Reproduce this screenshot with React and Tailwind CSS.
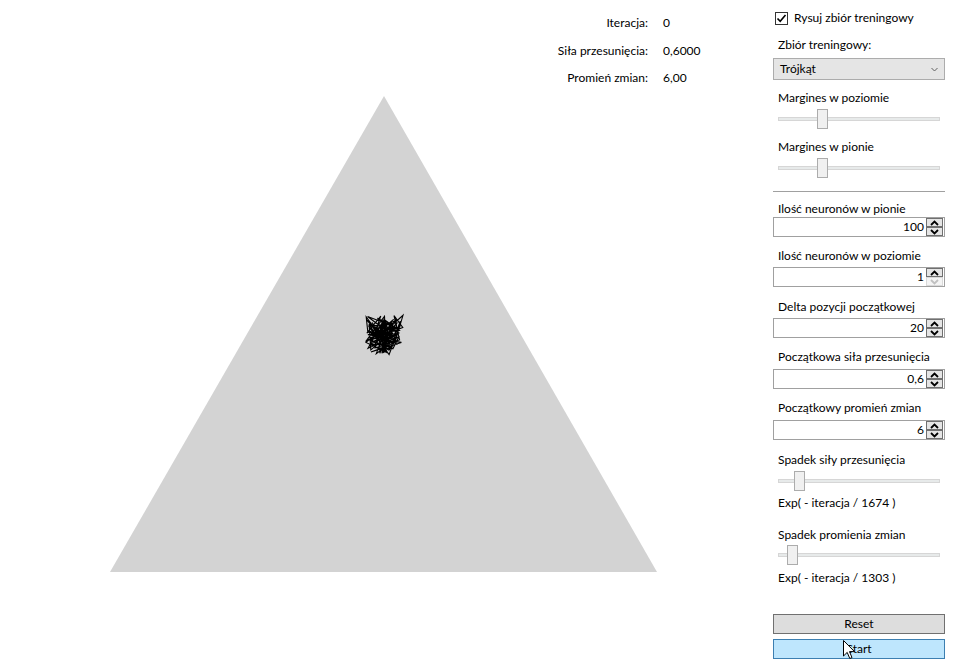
import React from 'react';

const font = "font-['Segoe_UI','Lato','Noto_Sans',sans-serif]";

// deterministic scribble of neuron chain
const makeChain = () => {
  let s = 7654321;
  const r = () => {
    s = (s * 16807) % 2147483647;
    return (s - 1) / 2147483646;
  };
  const pts = [];
  for (let i = 0; i < 100; i++) {
    const x = 366 + r() * 37;
    const y = 315 + r() * 40;
    pts.push(`${x.toFixed(1)},${y.toFixed(1)}`);
  }
  return pts.join(' ');
};
const chain = makeChain();

const Label = ({ children, className = '' }) => (
  <div className={`h-[16px] leading-[16px] pl-[5px] text-black whitespace-nowrap ${className}`}>{children}</div>
);

const Slider = ({ pos, className = '' }) => (
  <div className={`relative h-[20px] mx-[5px] flex items-center ${className}`}>
    <div className="w-full h-[4px] bg-[#e7eaea] border border-[#d6d6d6]" />
    <div
      className="absolute top-0 w-[11px] h-[20px] bg-[#f0f0f0] border border-[#acacac]"
      style={{ left: pos }}
    />
  </div>
);

const Arrow = ({ up, disabled }) => (
  <div
    className={`h-[9px] flex items-center justify-center border ${
      disabled ? 'border-[#d9d9d9] bg-[#f4f4f4]' : 'border-[#707070] bg-[#e5e5e5]'
    }`}
  >
    <svg width="9" height="6" viewBox="0 0 9 6">
      <polyline
        points={up ? '1,5 4.5,1.5 8,5' : '1,1 4.5,4.5 8,1'}
        fill="none"
        stroke={disabled ? '#c0c0c0' : '#000'}
        strokeWidth="1.8"
      />
    </svg>
  </div>
);

const NumberBox = ({ value, downDisabled, className = '' }) => (
  <div className={`h-[20px] flex border border-[#a0a0a0] bg-white ${className}`}>
    <div className="flex-1 text-right pr-[2px] leading-[18px] text-black">{value}</div>
    <div className="w-[17px] flex flex-col justify-center mr-[1px]">
      <Arrow up />
      <Arrow disabled={downDisabled} />
    </div>
  </div>
);

export default function App() {
  return (
    <div className={`flex w-[954px] h-[668px] bg-white text-[12px] overflow-hidden ${font}`}>
      {/* drawing canvas */}
      <div className="relative w-[773px] h-full">
        <svg width="773" height="668" className="absolute inset-0">
          <polygon points="384,96 110,572 657,572" fill="#d3d3d3" />
          <polyline points={chain} fill="none" stroke="#000" strokeWidth="1.1" />
        </svg>
        <div className="absolute left-[540px] top-[15px] grid grid-cols-[108px_auto] gap-x-[15px] gap-y-[11.5px] leading-[16px] text-black">
          <div className="text-right">Iteracja:</div>
          <div>0</div>
          <div className="text-right">Siła przesunięcia:</div>
          <div>0,6000</div>
          <div className="text-right">Promień zmian:</div>
          <div>6,00</div>
        </div>
      </div>

      {/* settings panel */}
      <div className="w-[172px] flex flex-col">
        <div className="mt-[10px] h-[16px] flex items-center">
          <div className="ml-[2px] w-[13px] h-[13px] border border-[#333] bg-white flex items-center justify-center">
            <svg width="11" height="11" viewBox="0 0 11 11">
              <polyline points="1.5,5.5 4.2,8.3 9.5,2" fill="none" stroke="#000" strokeWidth="1.6" />
            </svg>
          </div>
          <span className="ml-[6px] leading-[16px] text-black">Rysuj zbiór treningowy</span>
        </div>

        <Label className="mt-[11px]">Zbiór treningowy:</Label>
        <div className="mt-[5px] h-[22px] flex items-center justify-between border border-[#acacac] bg-[#e5e5e5] pl-[6px] pr-[6px]">
          <span className="text-black">Trójkąt</span>
          <svg width="7" height="5" viewBox="0 0 7 5">
            <polyline points="0.5,1 3.5,4 6.5,1" fill="none" stroke="#606060" strokeWidth="1" />
          </svg>
        </div>

        <Label className="mt-[10px]">Margines w poziomie</Label>
        <Slider pos={39} className="mt-[3px]" />
        <Label className="mt-[10px]">Margines w pionie</Label>
        <Slider pos={39} className="mt-[3px]" />

        <div className="mt-[13px] h-px bg-[#a0a0a0]" />

        <Label className="mt-[9px]">Ilość neuronów w pionie</Label>
        <NumberBox value="100" />
        <Label className="mt-[11px]">Ilość neuronów w poziomie</Label>
        <NumberBox value="1" downDisabled className="mt-[3px]" />
        <Label className="mt-[12px]">Delta pozycji początkowej</Label>
        <NumberBox value="20" className="mt-[3px]" />
        <Label className="mt-[11px]">Początkowa siła przesunięcia</Label>
        <NumberBox value="0,6" className="mt-[4px]" />
        <Label className="mt-[11px]">Początkowy promień zmian</Label>
        <NumberBox value="6" className="mt-[4px]" />

        <Label className="mt-[12px]">Spadek siły przesunięcia</Label>
        <Slider pos={16} className="mt-[3px]" />
        <Label className="mt-[4px]">Exp( - iteracja / 1674 )</Label>
        <Label className="mt-[16px]">Spadek promienia zmian</Label>
        <Slider pos={9} className="mt-[2px]" />
        <Label className="mt-[5px]">Exp( - iteracja / 1303 )</Label>

        <button className="mt-[28px] h-[20px] bg-[#dddddd] border border-[#707070] text-black leading-[18px]">Reset</button>
        <div className="relative mt-[5px]">
          <button className="w-full h-[20px] bg-[#bee6fd] border border-[#3c7fb1] text-black leading-[18px]">Start</button>
          {/* mouse pointer */}
          <svg width="13" height="20" viewBox="0 0 13 20" className="absolute left-[70px] top-[1px]">
            <path d="M0.5,0.5 L0.5,16 L4.2,12.4 L6.8,18.5 L9,17.6 L6.5,11.6 L11.5,11.6 Z" fill="#fff" stroke="#000" strokeWidth="1" />
          </svg>
        </div>
      </div>
    </div>
  );
}
